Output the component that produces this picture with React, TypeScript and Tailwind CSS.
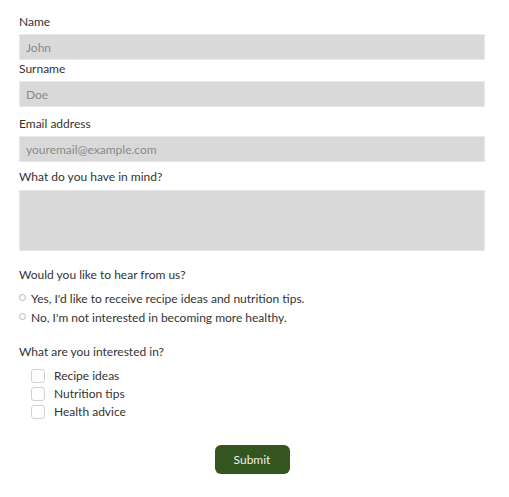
import React from "react"

const font = { fontFamily: "Lato, 'Open Sans', sans-serif" }

function Field({ label, placeholder, className = "" }: { label: string, placeholder: string, className?: string }) {
  return (
    <div className={className}>
      <label className="block text-[12px] leading-4 text-[#333]">{label}</label>
      <input
        placeholder={placeholder}
        className="mt-[4px] block h-[26px] w-full border border-[#e8e8e8] bg-[#d9d9d9] px-[6px] text-[12px] text-[#333] outline-none placeholder:text-[#8a8a8a]"
      />
    </div>
  )
}

function Radio({ label }: { label: string }) {
  return (
    <label className="flex h-4 items-center gap-[5px]">
      <span className="-mt-[4px] block h-[7px] w-[7px] shrink-0 rounded-full border border-[#b5b5b5] bg-white" />
      {label}
    </label>
  )
}

export default function App() {
  return (
    <div style={font} className="min-h-[497px] w-[509px] bg-white">
      <form className="pl-[19px] pr-[24px] pt-[14px]">
        <Field label="Name" placeholder="John" />
        <Field label="Surname" placeholder="Doe" className="mt-[1px]" />
        <Field label="Email address" placeholder="youremail@example.com" className="mt-[9px]" />

        <div className="mt-[7px]">
          <label className="block text-[12px] leading-4 text-[#333]">What do you have in mind?</label>
          <textarea className="mt-[5px] block h-[61px] w-full resize-none border border-[#e8e8e8] bg-[#d9d9d9] outline-none" />
        </div>

        <div className="mt-[16px] text-[12px] leading-4 text-[#333]">
          <p>Would you like to hear from us?</p>
          <div className="mt-[8px] flex flex-col gap-[3px]">
            <Radio label="Yes, I'd like to receive recipe ideas and nutrition tips." />
            <Radio label="No, I'm not interested in becoming more healthy." />
          </div>
        </div>

        <div className="mt-[18px] text-[12px] leading-4 text-[#333]">
          <p>What are you interested in?</p>
          <div className="mt-[8px] flex flex-col gap-[2px] pl-[12px]">
            {["Recipe ideas", "Nutrition tips", "Health advice"].map((t) => (
              <label key={t} className="flex h-4 items-center gap-[9px]">
                <span className="block h-[14px] w-[14px] shrink-0 rounded-[3px] border border-[#d0d0d0] bg-white" />
                {t}
              </label>
            ))}
          </div>
        </div>

        <div className="mt-[25px] flex justify-center">
          <button type="button" className="h-[29px] w-[75px] rounded-[6px] bg-[#33551f] text-[12px] text-[#f0f0e8]">
            Submit
          </button>
        </div>
      </form>
    </div>
  )
}
